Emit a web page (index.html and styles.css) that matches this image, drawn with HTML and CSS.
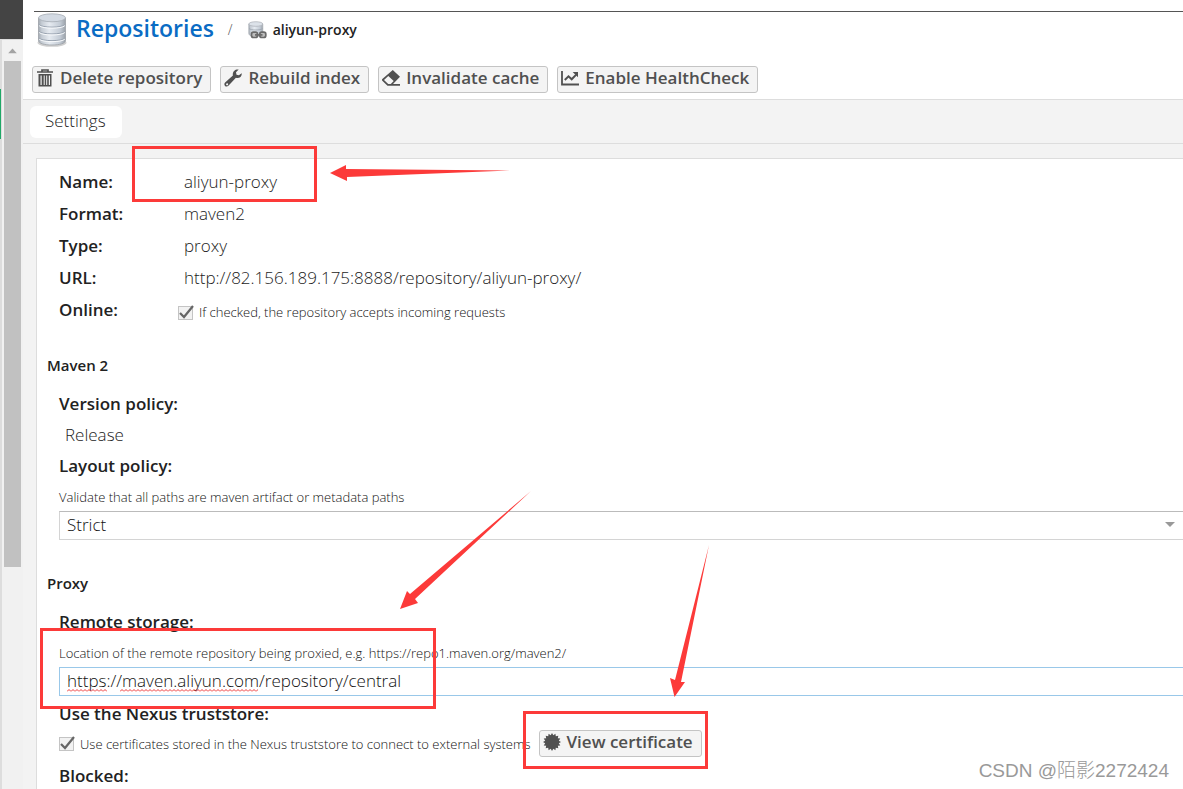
FILE: index.html
```html
<!DOCTYPE html>
<html lang="en">
<head>
<meta charset="utf-8">
<title>Repositories / aliyun-proxy</title>
<link rel="stylesheet" href="styles.css">
</head>
<body>
<div class="app">
  <aside class="rail">
    <div class="rail-top"></div>
    <div class="rail-body">
      <div class="rail-edge"><div class="rail-active"></div></div>
      <div class="scrollbar">
        <svg class="scroll-up" viewBox="0 0 17 22"><path d="M4 14h9L8.500 9z" fill="#a3a3a3"/></svg>
        <div class="scroll-thumb"></div>
      </div>
    </div>
  </aside>

  <main class="main">
    <header class="header">
      <div class="top-rule"></div>
      <nav class="crumbs">
        <svg class="icon-db" viewBox="0 0 30 34">
          <defs>
            <linearGradient id="metal" x1="0" x2="1" y1="0" y2="0">
              <stop offset="0" stop-color="#a3aab2"/><stop offset=".12" stop-color="#c5ccd4"/>
              <stop offset=".4" stop-color="#e6ebf1"/><stop offset=".8" stop-color="#c3cbd5"/>
              <stop offset="1" stop-color="#9ba2aa"/>
            </linearGradient>
          </defs>
          <ellipse cx="15" cy="29.800" rx="14.500" ry="4" fill="#cfcfcf"/>
          <path d="M1.500 5v22.500c0 3 6 4.500 13.500 4.500s13.500-1.500 13.500-4.500V5z" fill="url(#metal)" stroke="#9ca1a7" stroke-width=".8"/>
          <ellipse cx="15" cy="4.800" rx="13.500" ry="4" fill="#d3dae3" stroke="#a5abb2" stroke-width=".8"/>
          <path d="M1.800 11.500c3 3.500 23.400 3.500 26.400 0M1.800 18.300c3 3.500 23.400 3.500 26.400 0M1.800 25c3 3.500 23.400 3.500 26.400 0" fill="none" stroke="#9aa4b1" stroke-width="1"/>
          <path d="M2.200 12.700c3 3.300 22.600 3.300 25.600 0M2.200 19.500c3 3.300 22.600 3.300 25.600 0M2.200 26.200c3 3.300 22.600 3.300 25.600 0" fill="none" stroke="#f8fafc" stroke-width="1"/>
        </svg>
        <a class="crumb-root" href="#repositories">Repositories</a>
        <span class="crumb-sep">/</span>
        <svg class="icon-proxy" viewBox="0 0 19 19">
          <path d="M.8 3v9.500c0 2 3 3 7 3s7-1 7-3V3z" fill="url(#metal)" stroke="#a9aeb4" stroke-width=".7"/>
          <ellipse cx="7.800" cy="3" rx="7" ry="2.300" fill="#dce2e9" stroke="#a9aeb4" stroke-width=".7"/>
          <path d="M1 7.500c2 2 11.600 2 13.600 0" fill="none" stroke="#9aa3ad" stroke-width=".8"/>
          <g fill="#bdbdbd" stroke="#6a6a6a" stroke-width="1.700"><rect x="3.500" y="11.200" width="6" height="5.300" rx="2"/><rect x="11.800" y="11.200" width="6" height="5.300" rx="2"/><path d="M7 13.900h7.500"/></g>
        </svg>
        <span class="crumb-current">aliyun-proxy</span>
      </nav>
      <div class="toolbar">
        <button class="btn" type="button">
          <svg class="btn-icon" viewBox="0 0 18 18"><path d="M1 3h16M6 2.500V1h6v1.500" fill="none" stroke="#505050" stroke-width="1.700"/><path fill-rule="evenodd" d="M2.500 5h13v12.500h-13zM4.500 6.500v9.500h1.200V6.500zm3.200 0v9.500h1V6.500zm2.500 0v9.500h1V6.500zm2.600 0v9.500H14V6.500z" fill="#505050"/></svg>
          Delete repository</button>
        <button class="btn" type="button">
          <svg class="btn-icon" viewBox="0 0 18 18"><path fill-rule="evenodd" d="M17.700 4.200c.5 3-2.300 5.600-5.800 4.600l-7.500 8c-1 1-2.500 1-3.400.1-.9-1-.8-2.400.1-3.300l7.800-7C8.200 2.800 11 0 14.700.6L12 3.200l.5 2.500 2.400.5zM2.500 14.500a1 1 0 1 0 1.400 1.400 1 1 0 0 0-1.400-1.400z" fill="#505050"/></svg>
          Rebuild index</button>
        <button class="btn" type="button">
          <svg class="btn-icon" viewBox="0 0 18 18"><path fill-rule="evenodd" d="M10.800 1 18 7.800 11 15h7v1.800H5.500L.3 11.700c-.5-.6-.5-1.200 0-1.700zM6.300 7 2 10.900 6.200 15h2.600l2.900-2.900z" fill="#505050"/></svg>
          Invalidate cache</button>
        <button class="btn" type="button">
          <svg class="btn-icon" viewBox="0 0 18 18"><path d="M1 2v13.500h17" fill="none" stroke="#505050" stroke-width="1.800"/><path d="M3.800 11 7.500 7.300l3.200 3 4.500-4.700" fill="none" stroke="#505050" stroke-width="2"/><path d="M11.700 3H17v5.300z" fill="#505050"/></svg>
          Enable HealthCheck</button>
      </div>
    </header>

    <div class="tabs"><button class="tab" type="button">Settings</button></div>

    <form class="panel">
      <dl class="facts">
        <dt>Name:</dt><dd>aliyun-proxy</dd>
        <dt>Format:</dt><dd>maven2</dd>
        <dt>Type:</dt><dd>proxy</dd>
        <dt>URL:</dt><dd>http://82.156.189.175:8888/repository/aliyun-proxy/</dd>
        <dt>Online:</dt>
        <dd class="fact-check"><label class="check-label"><input class="check" type="checkbox" checked>If checked, the repository accepts incoming requests</label></dd>
      </dl>

      <section class="group">
        <h2 class="group-title">Maven 2</h2>
        <div class="field">
          <div class="label">Version policy:</div>
          <div class="static">Release</div>
        </div>
        <div class="field">
          <label class="label" for="layout">Layout policy:</label>
          <div class="hint">Validate that all paths are maven artifact or metadata paths</div>
          <select class="control select" id="layout"><option>Strict</option></select>
        </div>
      </section>

      <section class="group">
        <h2 class="group-title">Proxy</h2>
        <div class="field">
          <label class="label" for="remote">Remote storage:</label>
          <div class="hint">Location of the remote repository being proxied, e.g. https://repo1.maven.org/maven2/</div>
          <div class="input-wrap">
            <input class="control input" id="remote" type="text" value="https://maven.aliyun.com/repository/central">
            <span class="squiggle squiggle-scheme"></span>
            <span class="squiggle squiggle-host"></span>
          </div>
        </div>
        <div class="field">
          <div class="label label-trust">Use the Nexus truststore:</div>
          <div class="trust-row">
            <label class="check-label"><input class="check" type="checkbox" checked>Use certificates stored in the Nexus truststore to connect to external systems</label>
            <button class="btn" type="button">
              <svg class="btn-icon" viewBox="0 0 18 18"><path d="M9 0l1.300 2.200L12.400.7l.4 2.500 2.500-.5-.5 2.500 2.500.4-1.500 2.100L18 9l-2.200 1.300 1.500 2.100-2.500.4.5 2.500-2.500-.5-.4 2.500-2.100-1.500L9 18l-1.300-2.200-2.100 1.500-.4-2.500-2.500.5.5-2.500-2.500-.4 1.500-2.100L0 9l2.200-1.300L.7 5.600l2.500-.4-.5-2.500 2.500.5.4-2.500 2.100 1.500z" fill="#505050"/></svg>
              View certificate</button>
          </div>
        </div>
        <div class="field"><div class="label">Blocked:</div></div>
      </section>
    </form>
  </main>

  <svg class="marks" width="1183" height="789" viewBox="0 0 1183 789">
    <g fill="none" stroke="#fc3a39" stroke-width="3">
      <rect x="133.500" y="147.500" width="182" height="53"/>
      <rect x="41.500" y="629.500" width="393" height="78"/>
      <rect x="524.500" y="712.500" width="182" height="55"/>
    </g>
    <g fill="#fc3a39">
      <path d="M330 173 346 165V169L510 170.500 347 177V181z"/>
      <path d="M400 609 407 591 410 594 531 491 415 599 418 603z"/>
      <path d="M674.500 697 670 678 675 680 709 545 681 682 685 682z"/>
    </g>
  </svg>
  <div class="watermark">CSDN @陌影2272424</div>
</div>
</body>
</html>
```
FILE: styles.css
```css
* { box-sizing: border-box; }

body {
  margin: 0;
  background: #fff;
  color: #1c1c1c;
  font: 300 17px/24px "Open Sans", "Noto Sans CJK SC", sans-serif;
}

button, input, select { font: inherit; color: inherit; }

.app {
  position: relative;
  display: flex;
  height: 100vh;
  overflow: hidden;
}

/* Left rail with its scrollbar */
.rail { flex: none; width: 23px; display: flex; flex-direction: column; }
.rail-top { height: 39px; background: #444; }
.rail-body { flex: 1; display: flex; border-top: 1px solid #ddd; background: #f1f1f1; }
.rail-edge { width: 2px; margin-right: 2px; padding-top: 49px; background: #ddd; }
.rail-active { width: 1px; height: 50px; background: #1fa867; }
.scrollbar { width: 17px; display: flex; flex-direction: column; }
.scroll-up { width: 17px; height: 21px; }
.scroll-thumb { height: 506px; background: #c1c1c1; }

/* Header */
.main { flex: 1; min-width: 0; display: flex; flex-direction: column; background: #f3f3f3; }
.header { flex: none; background: #fff; height: 100px; border-bottom: 1px solid #ddd; }
.top-rule { margin: 11px 0 0 11px; height: 1px; background: #555; }
.crumbs { display: flex; align-items: center; height: 36px; padding-left: 14px; }
.icon-db { width: 30px; height: 34px; }
.crumb-root {
  margin: 0 14px 4px 9px;
  color: #0a6cc4;
  font-size: 23px;
  font-weight: 600;
  text-decoration: none;
}
.crumb-sep { font-size: 14px; color: #555; }
.icon-proxy { width: 19px; height: 19px; margin: 0 6px 0 15px; }
.crumb-current { font-size: 14px; font-weight: 600; color: #222; }

.toolbar { display: flex; gap: 9px; padding: 18px 0 0 9px; }
.btn {
  display: flex;
  align-items: center;
  gap: 6px;
  height: 27px;
  padding: 0 8px 3px 3px;
  border: 1px solid #c4c4c4;
  border-radius: 3px;
  background: #f4f4f4;
  color: #505050;
  font-weight: 600;
  line-height: 24px;
  white-space: nowrap;
}
.btn-icon { width: 18px; height: 18px; }

/* Tabs */
.tabs { flex: none; height: 44px; padding: 6px 0 0 7px; border-bottom: 1px solid #ddd; }
.tab { height: 32px; padding: 0 16px 2px 15px; border: 0; border-radius: 6px; background: #fff; }

/* Settings panel */
.panel {
  flex: 1 0 auto;
  margin: 14px 0 0 13px;
  padding-top: 7px;
  border: solid #ddd;
  border-width: 1px 0 0 1px;
  background: #fff;
}
.facts {
  display: grid;
  grid-template-columns: 125px 1fr;
  grid-auto-rows: 32px;
  align-items: center;
  margin: 0 0 0 22px;
}
.facts dt, .label { font-weight: 600; color: #222; }
.facts dd { margin: 0; }
.facts .fact-check { margin-left: -6px; padding-top: 4px; }

.check-label { display: flex; align-items: center; gap: 5px; font-size: 13px; font-weight: 300; color: #111; white-space: nowrap; }
.check {
  appearance: none;
  width: 16px;
  height: 17px;
  margin: 0;
  background: url("data:image/svg+xml,%3Csvg xmlns='http://www.w3.org/2000/svg' viewBox='0 0 16 17'%3E%3Crect x='.5' y='2.500' width='14' height='13' fill='%23f2f2f2' stroke='%23c4c4c4'/%3E%3Cpath d='M2 9l4 4 9-11' fill='none' stroke='%23666' stroke-width='2.200'/%3E%3C/svg%3E") no-repeat;
}

.group { padding: 27px 0 0 10px; }
.group + .group { padding-top: 31px; }
.group-title { margin: 0 0 14px; font-size: 15px; font-weight: 600; line-height: 24px; color: #222; }
.field { margin-left: 12px; }
.label { display: block; line-height: 26px; height: 29px; }
.static { height: 33px; padding-left: 6px; line-height: 30px; }
.hint { height: 18px; margin-top: 6px; font-size: 13px; line-height: 18px; color: #111; }

.control {
  display: block;
  width: calc(100% + 2px);
  height: 29px;
  margin-top: 5px;
  padding: 0 7px 2px;
  border: 1px solid #d4d4d4;
  border-top-color: #bbb;
  border-radius: 0;
  background: #fff;
  color: #111;
}
.select {
  appearance: none;
  background: url("data:image/svg+xml,%3Csvg xmlns='http://www.w3.org/2000/svg' width='10' height='5'%3E%3Cpath d='M0 0h10L5 5z' fill='%23999'/%3E%3C/svg%3E") no-repeat right 9px top 10px;
}
.input { border-color: #99c8e9; outline: 0; }
.input-wrap { position: relative; }

.squiggle {
  position: absolute;
  top: 22px;
  height: 3px;
  background: url("data:image/svg+xml,%3Csvg xmlns='http://www.w3.org/2000/svg' width='4' height='3'%3E%3Cpath d='M0 2.500 2 .5 4 2.500' fill='none' stroke='%23e33'/%3E%3C/svg%3E") repeat-x;
}
.squiggle-scheme { left: 8px; width: 40px; }
.squiggle-host { left: 61px; width: 138px; }

.label-trust { margin-top: 5px; }
.trust-row { display: flex; align-items: center; gap: 8px; height: 27px; margin-bottom: 6px; }

/* Drawn marks and watermark over the page */
.marks { position: absolute; left: 0; top: 0; pointer-events: none; }
.watermark {
  position: absolute;
  right: 14px;
  bottom: 6px;
  color: #999;
  font: 300 19px/24px "Liberation Sans", "Noto Sans CJK SC", sans-serif;
}
```
